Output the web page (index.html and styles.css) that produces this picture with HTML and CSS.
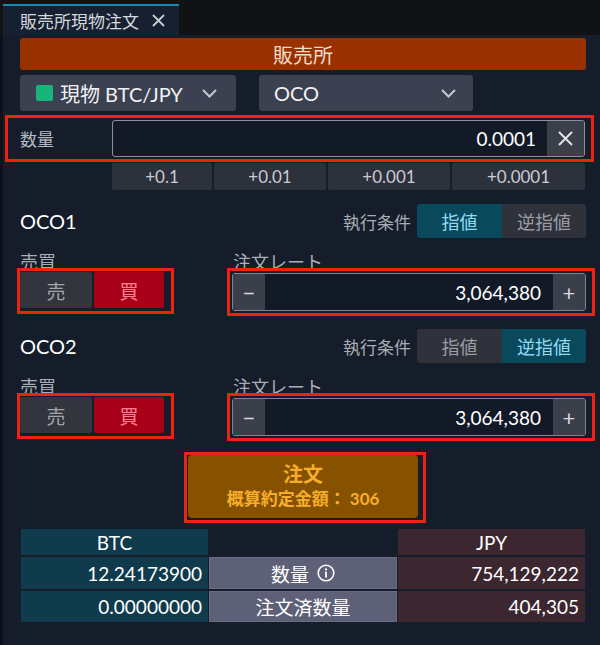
FILE: index.html
```html
<!DOCTYPE html>
<html lang="ja">
<head>
    <meta charset="UTF-8">
    <meta name="viewport" content="width=device-width, initial-scale=1.0">
    <title>販売所現物注文</title>
    <link rel="stylesheet" href="styles.css">
</head>
<body>
    <!-- タブ -->
    <div class="tabbar">
        <div class="tab">
            <span class="tab-title">販売所現物注文</span>
            <svg class="tab-close" width="13" height="13" viewBox="0 0 13 13">
                <path d="M1 1 L12 12 M12 1 L1 12" stroke="#c9ccd2" stroke-width="1.8"/>
            </svg>
        </div>
    </div>

    <div class="panel">
        <div class="market-bar">販売所</div>

        <!-- 銘柄・注文タイプ -->
        <div class="select-row">
            <div class="select select-pair">
                <span class="pair-mark"></span>
                <span class="select-text">現物 BTC/JPY</span>
                <svg class="chevron" width="15" height="9" viewBox="0 0 15 9">
                    <polyline points="1,1 7.5,7.5 14,1" fill="none" stroke="#c5c8cf" stroke-width="2"/>
                </svg>
            </div>
            <div class="select select-type">
                <span class="select-text">OCO</span>
                <svg class="chevron" width="15" height="9" viewBox="0 0 15 9">
                    <polyline points="1,1 7.5,7.5 14,1" fill="none" stroke="#c5c8cf" stroke-width="2"/>
                </svg>
            </div>
        </div>

        <!-- 数量 -->
        <div class="mark qty-box">
            <span class="qty-label">数量</span>
            <div class="qty-input">
                <span class="qty-value">0.0001</span>
                <div class="qty-clear">
                    <svg width="15" height="15" viewBox="0 0 15 15">
                        <path d="M1 1 L14 14 M14 1 L1 14" stroke="#e0e2e6" stroke-width="2"/>
                    </svg>
                </div>
            </div>
        </div>
        <div class="step-row">
            <div class="step step-1">+0.1</div>
            <div class="step step-2">+0.01</div>
            <div class="step step-3">+0.001</div>
            <div class="step step-4">+0.0001</div>
        </div>

        <!-- OCO1 -->
        <div class="leg-head">
            <span class="leg-name">OCO1</span>
            <span class="cond-label">執行条件</span>
            <div class="toggle">
                <div class="toggle-btn active">指値</div>
                <div class="toggle-btn">逆指値</div>
            </div>
        </div>
        <div class="leg-body">
            <div class="side-col">
                <div class="field-label">売買</div>
                <div class="mark side-box">
                    <div class="side-btn sell">売</div>
                    <div class="side-btn buy">買</div>
                </div>
            </div>
            <div class="rate-col">
                <div class="field-label">注文レート</div>
                <div class="mark rate-box">
                    <div class="rate-input">
                        <div class="rate-step">&minus;</div>
                        <span class="rate-value">3,064,380</span>
                        <div class="rate-step">+</div>
                    </div>
                </div>
            </div>
        </div>

        <!-- OCO2 -->
        <div class="leg-head leg-second">
            <span class="leg-name">OCO2</span>
            <span class="cond-label">執行条件</span>
            <div class="toggle">
                <div class="toggle-btn">指値</div>
                <div class="toggle-btn active">逆指値</div>
            </div>
        </div>
        <div class="leg-body">
            <div class="side-col">
                <div class="field-label">売買</div>
                <div class="mark side-box">
                    <div class="side-btn sell">売</div>
                    <div class="side-btn buy">買</div>
                </div>
            </div>
            <div class="rate-col">
                <div class="field-label">注文レート</div>
                <div class="mark rate-box">
                    <div class="rate-input">
                        <div class="rate-step">&minus;</div>
                        <span class="rate-value">3,064,380</span>
                        <div class="rate-step">+</div>
                    </div>
                </div>
            </div>
        </div>

        <!-- 注文ボタン -->
        <div class="order-wrap">
            <div class="mark order-box">
                <div class="order-btn">
                    <div class="order-title">注文</div>
                    <div class="order-sub">概算約定金額： 306</div>
                </div>
            </div>
        </div>

        <!-- 残高 -->
        <div class="balance">
            <div class="cell btc head">BTC</div>
            <div class="cell blank"></div>
            <div class="cell jpy head">JPY</div>

            <div class="cell btc num">12.24173900</div>
            <div class="cell mid">
                数量
                <svg class="info" width="18" height="18" viewBox="0 0 18 18">
                    <circle cx="9" cy="9" r="7.8" fill="none" stroke="#fff" stroke-width="1.6"/>
                    <circle cx="9" cy="5.4" r="1.1" fill="#fff"/>
                    <rect x="8.1" y="7.6" width="1.8" height="6" fill="#fff"/>
                </svg>
            </div>
            <div class="cell jpy num">754,129,222</div>

            <div class="cell btc num">0.00000000</div>
            <div class="cell mid">注文済数量</div>
            <div class="cell jpy num">404,305</div>
        </div>
    </div>
</body>
</html>
```

FILE: styles.css
```css
body {
    margin: 0;
    width: 600px;
    height: 645px;
    overflow: hidden;
    background: #0d1219;
    font-family: Lato, "Noto Sans CJK JP", sans-serif;
    color: #e6e8ec;
}

/* タブ */
.tabbar {
    height: 35px;
    background: #111214;
    padding: 4px 0 0 3px;
    box-sizing: border-box;
}

.tab {
    width: 176px;
    height: 31px;
    background: #172030;
    border-top: 2px solid #1b8cb0;
    box-sizing: border-box;
    display: flex;
    align-items: center;
    padding-left: 17px;
}

.tab-title {
    font-size: 17px;
    color: #d5d8de;
}

.tab-close {
    margin-left: 13px;
}

/* パネル */
.panel {
    margin-left: 3px;
    height: 610px;
    background: #151c2a;
    padding: 3px 14px 0 17px;
    box-sizing: border-box;
}

.market-bar {
    height: 32px;
    background: #983000;
    border-radius: 3px;
    display: flex;
    align-items: center;
    justify-content: center;
    font-size: 20px;
    color: #f3dccb;
}

.select-row {
    display: flex;
    gap: 23px;
    margin-top: 5px;
}

.select {
    height: 36px;
    background: #3b4150;
    border-radius: 3px;
    display: flex;
    align-items: center;
    box-sizing: border-box;
    font-size: 20px;
    color: #f1f2f4;
}

.select-pair {
    width: 216px;
    padding: 0 19px 0 16px;
}

.select-type {
    width: 214px;
    padding: 0 17px 0 15px;
}

.pair-mark {
    width: 17px;
    height: 16px;
    background: #17b47b;
    border-radius: 2px;
    margin-right: 7px;
}

.select-text {
    flex: 1;
}

/* 赤枠 */
.mark {
    border: 3px solid #ee2211;
    box-sizing: border-box;
    position: relative;
}

/* 数量 */
.qty-box {
    margin: 4px -8px 0 -15px;
    height: 47px;
    display: flex;
    align-items: center;
    padding: 0 6px 0 12px;
}

.qty-label {
    width: 92px;
    font-size: 17px;
    color: #b4b8c0;
}

.qty-input {
    flex: 1;
    height: 37px;
    border: 1px solid #8b909a;
    border-radius: 3px;
    background: #131a27;
    display: flex;
    align-items: stretch;
    box-sizing: border-box;
    overflow: hidden;
}

.qty-value {
    flex: 1;
    text-align: right;
    align-self: center;
    padding-right: 11px;
    font-size: 19px;
    color: #fff;
}

.qty-clear {
    width: 37px;
    background: #3b3f4a;
    display: flex;
    align-items: center;
    justify-content: center;
}

.step-row {
    display: flex;
    gap: 2px;
    margin: 1px 1px 0 92px;
    height: 27px;
}

.step {
    background: #2c313c;
    border-radius: 2px;
    display: flex;
    align-items: center;
    justify-content: center;
    font-size: 17px;
    color: #c9ccd2;
}

.step-1 { flex: 100; }
.step-2 { flex: 112; }
.step-3 { flex: 122; }
.step-4 { flex: 133; }

/* OCO 各レッグ */
.leg-head {
    display: flex;
    align-items: center;
    height: 34px;
    margin-top: 14px;
}

.leg-second {
    margin-top: 13px;
}

.leg-name {
    flex: 1;
    font-size: 20px;
    color: #fff;
}

.cond-label {
    font-size: 17px;
    color: #a9adb6;
    margin-right: 6px;
}

.toggle {
    display: flex;
    height: 34px;
    border-radius: 3px;
    overflow: hidden;
}

.toggle-btn {
    width: 84px;
    display: flex;
    align-items: center;
    justify-content: center;
    font-size: 18px;
    background: #2f313b;
    color: #9b9da5;
}

.toggle-btn:first-child {
    width: 85px;
}

.toggle-btn.active {
    background: #0a495b;
    color: #8fdcf2;
}

.leg-body {
    display: flex;
    margin-top: 16px;
}

.field-label {
    height: 17px;
    line-height: 17px;
    font-size: 18px;
    color: #a9adb6;
}

.side-col {
    width: 157px;
    margin-left: -3px;
}

.side-col .field-label {
    padding-left: 3px;
}

.side-box {
    margin-top: -3px;
    height: 46px;
    display: flex;
    gap: 2px;
    padding: 1px 0 0 0;
}

.side-btn {
    height: 36px;
    display: flex;
    align-items: center;
    justify-content: center;
    font-size: 19px;
    border-radius: 2px;
}

.sell {
    width: 72px;
    background: #33353e;
    color: #a3a5ab;
}

.buy {
    width: 70px;
    background: #a9001a;
    color: #ff8292;
}

.rate-col {
    flex: 1;
    margin: 0 -9px 0 53px;
}

.rate-col .field-label {
    padding-left: 6px;
}

.rate-box {
    margin-top: -3px;
    height: 48px;
    padding: 2px 6px 0 2px;
}

.rate-input {
    height: 38px;
    border: 1px solid #7f8490;
    border-radius: 3px;
    background: #131a27;
    display: flex;
    align-items: stretch;
    box-sizing: border-box;
    overflow: hidden;
}

.rate-step {
    width: 32px;
    background: #3b3f4a;
    display: flex;
    align-items: center;
    justify-content: center;
    font-size: 22px;
    color: #d8dade;
}

.rate-value {
    flex: 1;
    align-self: center;
    text-align: right;
    padding-right: 12px;
    font-size: 19px;
    color: #fff;
}

/* 注文ボタン */
.order-wrap {
    display: flex;
    justify-content: center;
    margin-top: 11px;
}

.order-box {
    width: 242px;
    height: 71px;
    padding: 0 5px 2px 1px;
    margin-left: 4px;
}

.order-btn {
    height: 63px;
    background: #875200;
    border-radius: 4px;
    display: flex;
    flex-direction: column;
    align-items: center;
    justify-content: center;
    color: #f6ad2c;
    font-weight: bold;
}

.order-title {
    font-size: 20px;
    line-height: 25px;
}

.order-sub {
    font-size: 17px;
    line-height: 24px;
}

/* 残高テーブル */
.balance {
    display: grid;
    grid-template-columns: 187px 188px 187px;
    grid-template-rows: 26px 32px 31px;
    column-gap: 1px;
    row-gap: 2px;
    margin: 6px 0 0 1px;
}

.cell {
    display: flex;
    align-items: center;
    font-size: 19px;
    color: #fff;
    box-sizing: border-box;
}

.head {
    justify-content: center;
}

.num {
    justify-content: flex-end;
    padding-right: 6px;
}

.btc { background: #0f3b4d; }
.jpy { background: #3c262f; }

.mid {
    background: #5e6077;
    box-shadow: inset 0 0 0 1px #6a6d84;
    justify-content: center;
    font-size: 19px;
}

.info {
    margin-left: 8px;
}
```
